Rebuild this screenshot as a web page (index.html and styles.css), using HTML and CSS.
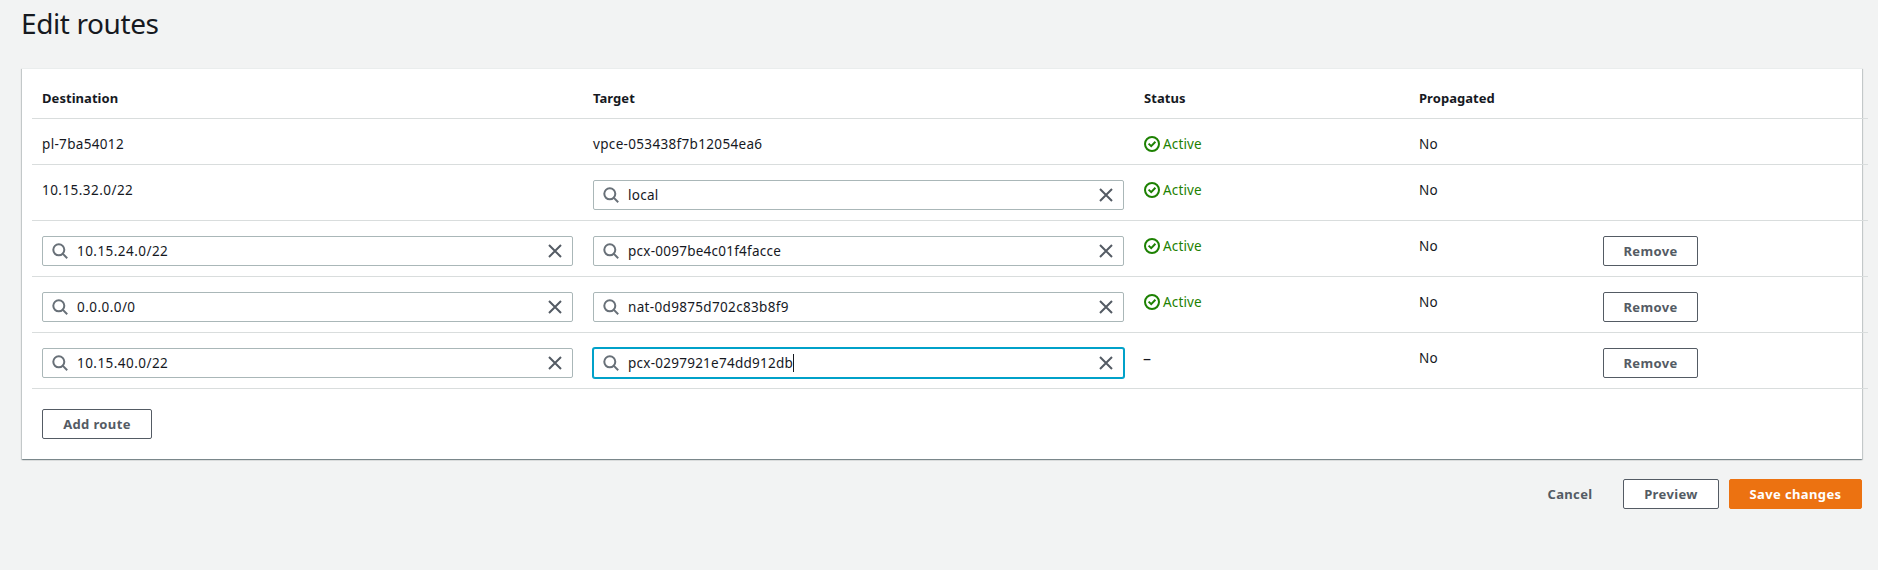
FILE: index.html
```html
<!DOCTYPE html>
<html lang="en">
<head>
<meta charset="utf-8">
<title>Edit routes</title>
<link rel="stylesheet" href="styles.css">
</head>
<body>
<svg class="sprite" aria-hidden="true">
  <symbol id="search" viewBox="0 0 16 16"><circle cx="6.8" cy="6.8" r="5.5"/><path d="M10.9 10.9 15.2 15.2"/></symbol>
  <symbol id="close" viewBox="0 0 16 16"><path d="M2 2 14 14M14 2 2 14"/></symbol>
  <symbol id="check" viewBox="0 0 16 16"><circle cx="8" cy="8" r="7"/><path d="M4.6 7.6 7.2 10.1 11.4 5.8"/></symbol>
</svg>
<main class="page">
  <h1 class="title">Edit routes</h1>
  <section class="card">
    <div class="table">
      <div class="row head"><div class="cell">Destination</div><div class="cell">Target</div><div class="cell">Status</div><div class="cell">Propagated</div></div>
      <div class="row">
        <div class="cell id">pl-7ba54012</div>
        <div class="cell id">vpce-053438f7b12054ea6</div>
        <div class="cell"><span class="status"><svg class="icon"><use href="#check"/></svg>Active</span></div>
        <div class="cell">No</div>
      </div>
      <div class="row">
        <div class="cell ip">10.15.32.0/22</div>
        <div class="cell"><div class="field"><svg class="icon"><use href="#search"/></svg><span class="value">local</span><svg class="icon clear"><use href="#close"/></svg></div></div>
        <div class="cell"><span class="status"><svg class="icon"><use href="#check"/></svg>Active</span></div>
        <div class="cell">No</div>
      </div>
      <div class="row">
        <div class="cell"><div class="field"><svg class="icon"><use href="#search"/></svg><span class="value ip">10.15.24.0/22</span><svg class="icon clear"><use href="#close"/></svg></div></div>
        <div class="cell"><div class="field"><svg class="icon"><use href="#search"/></svg><span class="value">pcx-0097be4c01f4facce</span><svg class="icon clear"><use href="#close"/></svg></div></div>
        <div class="cell"><span class="status"><svg class="icon"><use href="#check"/></svg>Active</span></div>
        <div class="cell">No</div>
        <div class="cell"><button class="btn remove">Remove</button></div>
      </div>
      <div class="row">
        <div class="cell"><div class="field"><svg class="icon"><use href="#search"/></svg><span class="value ip">0.0.0.0/0</span><svg class="icon clear"><use href="#close"/></svg></div></div>
        <div class="cell"><div class="field"><svg class="icon"><use href="#search"/></svg><span class="value id">nat-0d9875d702c83b8f9</span><svg class="icon clear"><use href="#close"/></svg></div></div>
        <div class="cell"><span class="status"><svg class="icon"><use href="#check"/></svg>Active</span></div>
        <div class="cell">No</div>
        <div class="cell"><button class="btn remove">Remove</button></div>
      </div>
      <div class="row">
        <div class="cell"><div class="field"><svg class="icon"><use href="#search"/></svg><span class="value ip">10.15.40.0/22</span><svg class="icon clear"><use href="#close"/></svg></div></div>
        <div class="cell"><div class="field focused"><svg class="icon"><use href="#search"/></svg><span class="value">pcx-0297921e74dd912db</span><i class="caret"></i><svg class="icon clear"><use href="#close"/></svg></div></div>
        <div class="cell none">–</div>
        <div class="cell">No</div>
        <div class="cell"><button class="btn remove">Remove</button></div>
      </div>
    </div>
    <button class="btn add">Add route</button>
  </section>
  <footer class="actions">
    <button class="btn link">Cancel</button>
    <button class="btn preview">Preview</button>
    <button class="btn primary">Save changes</button>
  </footer>
</main>
</body>
</html>
```
FILE: styles.css
```css
* { box-sizing: border-box; }
body {
  margin: 0;
  background: #f2f3f3;
  color: #16191f;
  font: 13.5px/20px "Noto Sans", sans-serif;
  letter-spacing: .15px;
}
.sprite { display: none; }
.page { padding: 5px 16px 0 22px; }
.title {
  margin: 0 0 27px -1px;
  font-size: 28px;
  font-weight: 400;
  line-height: 36px;
  letter-spacing: -.4px;
}
.card {
  width: 1840px;
  height: 391px;
  padding: 0 0 0 10px;
  border-top: 1px solid #eaeded;
  background: #fff;
  box-shadow: 0 1px 1px 0 rgba(0,28,36,.3), 1px 1px 1px 0 rgba(0,28,36,.15), -1px 1px 1px 0 rgba(0,28,36,.15);
}
.table { width: 1836px; }
.row {
  display: grid;
  grid-template-columns: 551px 551px 275px 184px 1fr;
  border-bottom: 1px solid #d9dddd;
}
.cell { padding: 15px 10px 10px; }
.head { font-size: 13px; font-weight: 700; letter-spacing: .05px; }
.head .cell { padding: 19px 10px 10px; }
.id { letter-spacing: .33px; }
.ip { letter-spacing: .45px; }
.none { padding-left: 9px; font-size: 16px; }
.icon { width: 16px; height: 16px; fill: none; stroke: #687078; stroke-width: 2; flex: none; }
.status { display: flex; align-items: center; gap: 3px; color: #1d8102; }
.status .icon { stroke: #1d8102; }
.field {
  display: flex;
  align-items: center;
  height: 30px;
  padding: 0 9px;
  border: 1px solid #aab7b8;
  border-radius: 2px;
  background: #fff;
}
.focused { border-color: #00a1c9; box-shadow: 0 0 0 1px #00a1c9; }
.value { margin-left: 9px; }
.value:not(.ip):not(.id) { letter-spacing: .25px; }
.caret { width: 1px; height: 18px; background: #16191f; }
.clear { margin-left: auto; stroke: #545b64; }
.btn {
  height: 30px;
  padding: 0;
  border: 1px solid #545b64;
  border-radius: 2px;
  background: #fff;
  color: #545b64;
  font: 700 13px/20px "Noto Sans", sans-serif;
  letter-spacing: .37px;
}
.remove { display: block; width: 95px; }
.add { display: block; width: 110px; margin: 20px 0 0 10px; }
.actions { display: flex; justify-content: flex-end; gap: 10px; padding-top: 20px; width: 1840px; }
.link { width: 86px; border-color: transparent; background: transparent; }
.preview { width: 96px; }
.primary { width: 133px; border-color: #ec7211; background: #ec7211; color: #fff; }
```
